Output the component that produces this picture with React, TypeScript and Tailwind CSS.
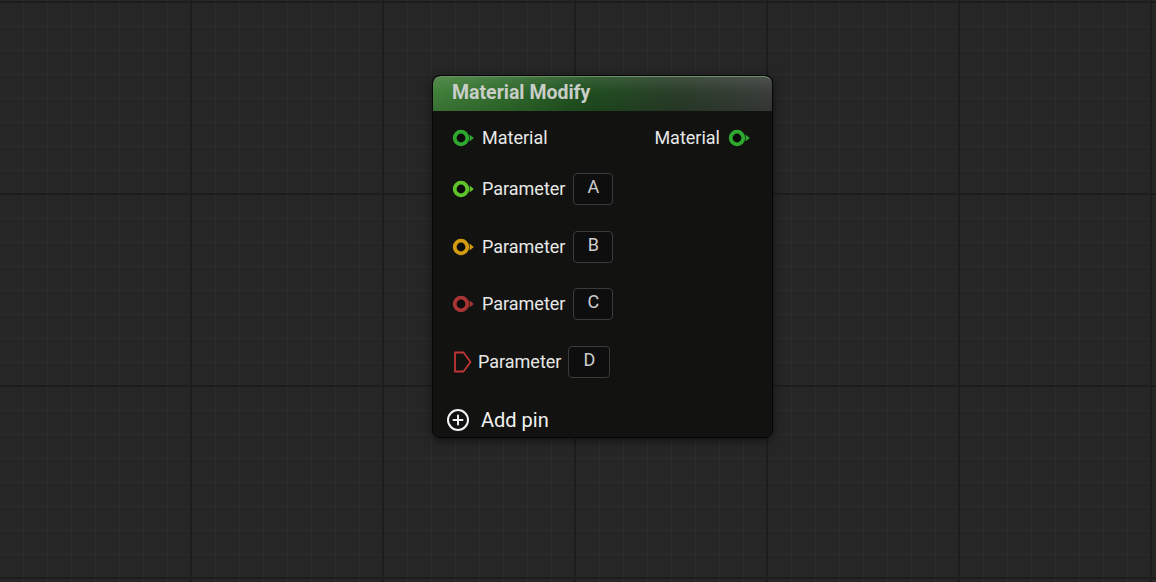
import React from "react";

function Pin({ color, inner = "#0b0b0b" }: { color: string; inner?: string }) {
  return (
    <svg width="24" height="18" viewBox="0 0 24 18" className="shrink-0">
      <circle cx="9" cy="9" r="6.3" fill={inner} stroke={color} strokeWidth="3.8" />
      <path d="M17.6 5.6 L21.8 9 L17.6 12.4 Z" fill={color} />
    </svg>
  );
}

function ExecPin({ color }: { color: string }) {
  return (
    <svg width="20" height="22" viewBox="0 0 20 22" className="shrink-0">
      <path d="M2 1.5 H10.5 L17.5 11 L10.5 20.5 H2 Z" fill="none" stroke={color} strokeWidth="1.8" strokeLinejoin="round" />
    </svg>
  );
}

function ValueBox({ label, w = "w-[40px]" }: { label: string; w?: string }) {
  return (
    <div
      className={`${w} h-[32px] rounded-[4px] border border-[#3a3b3a] bg-[#0d0e0d] flex items-center justify-center text-[18px] text-[#cdcdcd] leading-none pb-[5px]`}
    >
      {label}
    </div>
  );
}

function ParamRow({ color, label }: { color: string; label: string }) {
  return (
    <div className="flex items-center h-[32px]">
      <Pin color={color} />
      <span className="ml-[6px] text-[18px] text-[#e8e8e8] leading-none">Parameter</span>
      <div className="ml-[8px]">
        <ValueBox label={label} />
      </div>
    </div>
  );
}

export default function App() {
  return (
    <div
      className="relative w-full h-[582px] overflow-hidden bg-[#262626] bg-[linear-gradient(to_right,#1d1d1d_2px,transparent_2px),linear-gradient(to_bottom,#1d1d1d_2px,transparent_2px),linear-gradient(to_right,#2c2c2c_1px,transparent_1px),linear-gradient(to_bottom,#2c2c2c_1px,transparent_1px)] bg-[size:192px_192px,192px_192px,24px_24px,24px_24px] bg-[position:-2px_1px,-2px_1px,-1px_2px,-1px_2px]"
      style={{ fontFamily: "Roboto, 'Noto Sans', sans-serif" }}
    >
      <div className="absolute left-[432px] top-[75px] w-[341px] h-[363px] rounded-[8px] bg-[#121311] border border-[#050505] shadow-[0_2px_10px_rgba(0,0,0,0.55)] flex flex-col overflow-hidden">
        <div className="relative h-[35px] shrink-0 bg-[linear-gradient(to_right,#417f3a_0%,#33702e_18%,#1f4f1f_45%,#2a3d29_72%,#3a3d3a_100%)] border-t border-[#6c8f68] rounded-t-[8px]">
          <div className="absolute inset-0 bg-[linear-gradient(to_bottom,rgba(255,255,255,0.10)_0%,rgba(255,255,255,0)_45%,rgba(0,0,0,0.12)_100%)]" />
          <div className="relative pl-[19px] pt-[4px] text-[19.5px] font-bold text-[#c9cdc8] leading-[24px]">
            Material Modify
          </div>
        </div>
        <div className="flex flex-col pl-[19px] pr-[20px] pt-[16px]">
          <div className="flex items-center justify-between h-[22px]">
            <div className="flex items-center">
              <Pin color="#2fa82f" />
              <span className="ml-[6px] text-[18px] text-[#e8e8e8] leading-none">Material</span>
            </div>
            <div className="flex items-center">
              <span className="mr-[8px] text-[18px] text-[#e8e8e8] leading-none">Material</span>
              <Pin color="#2fa82f" />
            </div>
          </div>
          <div className="mt-[24px]">
            <ParamRow color="#5ec42a" label="A" />
          </div>
          <div className="mt-[26px]">
            <ParamRow color="#d49a10" label="B" />
          </div>
          <div className="mt-[25px]">
            <ParamRow color="#a83434" label="C" />
          </div>
          <div className="mt-[26px] flex items-center h-[32px]">
            <div className="ml-[1px]">
              <ExecPin color="#c03636" />
            </div>
            <span className="ml-[5px] text-[18px] text-[#e8e8e8] leading-none">Parameter</span>
            <div className="ml-[7px]">
              <ValueBox label="D" w="w-[42px]" />
            </div>
          </div>
          <div className="mt-[30px] -ml-[6px] flex items-center h-[24px]">
            <svg width="24" height="24" viewBox="0 0 24 24" className="shrink-0">
              <circle cx="12" cy="12" r="10" fill="none" stroke="#f2f2f2" strokeWidth="2" />
              <path d="M12 7.5 V16.5 M7.5 12 H16.5" stroke="#f2f2f2" strokeWidth="2" strokeLinecap="round" />
            </svg>
            <span className="ml-[11px] text-[20px] text-[#f2f2f2] leading-none">Add pin</span>
          </div>
        </div>
      </div>
    </div>
  );
}
